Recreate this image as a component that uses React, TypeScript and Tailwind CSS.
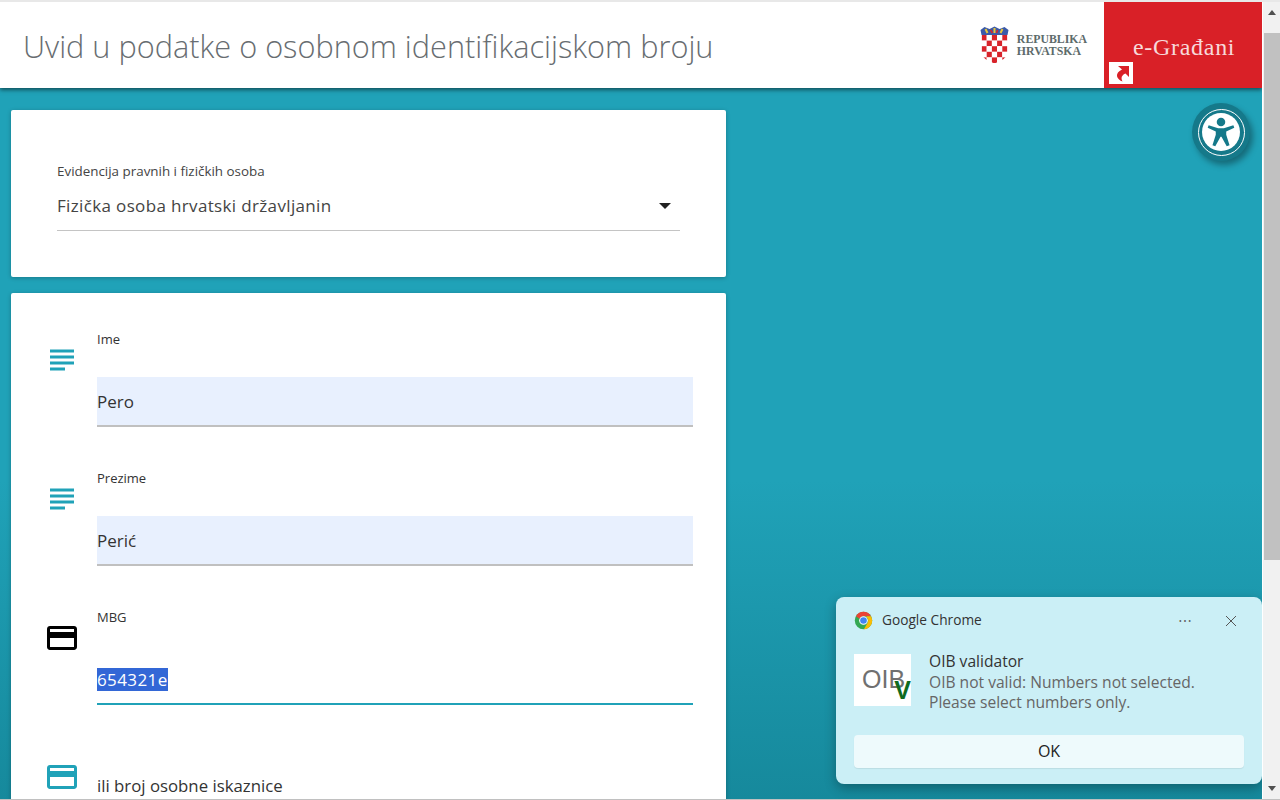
const CARD = "M20 4H4c-1.11 0-1.99.89-1.99 2L2 18c0 1.11.89 2 2 2h16c1.11 0 2-.89 2-2V6c0-1.11-.89-2-2-2zm0 14H4v-6h16v6zm0-10H4V6h16v2z";
const SUBJECT = "M14 17H4v2h10v-2zm6-8H4v2h16V9zM4 15h16v-2H4v2zM4 5v2h16V5H4z";

function Icon({ d, color }: { d: string; color: string }) {
  return (
    <svg viewBox="0 0 24 24" className="h-9 w-9 shrink-0" fill={color}>
      <path d={d} />
    </svg>
  );
}

function Crest() {
  const cells: React.ReactNode[] = [];
  for (let r = 0; r < 5; r++) {
    for (let c = 0; c < 5; c++) {
      cells.push(
        <rect key={`${r}-${c}`} x={1 + c * 5.2} y={9 + r * 5.6} width={5.2} height={5.6} fill={(r + c) % 2 === 0 ? "#d8232a" : "#ffffff"} />
      );
    }
  }
  return (
    <svg viewBox="0 0 28 38" className="h-[38px] w-[33px] shrink-0">
      <defs>
        <clipPath id="shield">
          <path d="M1 9 H27 V28 Q26 33 14 37.5 Q2 33 1 28 Z" />
        </clipPath>
      </defs>
      <path d="M0 4 L4 1 L9 3 L14 0.5 L19 3 L24 1 L28 4 L27 9 L1 9 Z" fill="#3b5aa8" />
      <path d="M5 3 L7 7 M14 2 L14 7 M22 3 L20 7" stroke="#e8c53a" strokeWidth="2" />
      <path d="M10 4 L12 7 M17 4 L16 7" stroke="#d8232a" strokeWidth="1.5" />
      <g clipPath="url(#shield)">{cells}</g>
    </svg>
  );
}

function ChromeLogo() {
  return (
    <svg viewBox="0 0 48 48" className="h-[19px] w-[19px] shrink-0">
      <circle cx="24" cy="24" r="22" fill="#34a853" />
      <path d="M24 2a22 22 0 0 1 19 11H24a11 11 0 0 0-10 6.5L5 13A22 22 0 0 1 24 2z" fill="#ea4335" />
      <path d="M43 13a22 22 0 0 1-18 33l9.5-16.5A11 11 0 0 0 33 17l-2-4z" fill="#fbbc04" />
      <circle cx="24" cy="24" r="11" fill="#ffffff" />
      <circle cx="24" cy="24" r="8.4" fill="#4285f4" />
    </svg>
  );
}

function TextRow({ label, value, first }: { label: string; value: string; first?: boolean }) {
  return (
    <div className={`flex ${first ? "" : "mt-[42px]"}`}>
      <div className="ml-[33px] mt-[12px] w-[53px]">
        <Icon d={SUBJECT} color="#20a2b8" />
      </div>
      <div className="flex w-[596px] flex-col">
        <div className="h-[47px] text-[13px] leading-[18px] text-[#333]">{label}</div>
        <div className="flex h-[50px] items-center border-b-2 border-[#c0c0c0] bg-[#e8f0fe] pt-[1px] text-[17px] text-[#333]">{value}</div>
      </div>
    </div>
  );
}

export default function App() {
  return (
    <div className="flex h-screen w-[1280px] flex-col overflow-hidden bg-[#f1f1f1] font-['Open_Sans','Noto_Sans',sans-serif]">
      <div className="h-[2px] shrink-0 bg-[#e8e8e8]" />
      <div className="flex min-h-0 flex-1">
        <div className="relative flex w-[1262px] shrink-0 flex-col overflow-hidden bg-[linear-gradient(180deg,#20a2b8_0%,#20a2b8_60%,#16899c_100%)]">
          <header className="relative z-10 flex h-[86px] shrink-0 items-stretch justify-between bg-white shadow-[0_2px_4px_rgba(0,0,0,0.5)]">
            <h1 className="pl-[23px] pt-[22px] text-[30.7px] font-light leading-[44px] text-[#686d71]">Uvid u podatke o osobnom identifikacijskom broju</h1>
            <div className="flex">
              <div className="mr-[17px] flex items-start gap-[6px] pt-[24px]">
                <Crest />
                <div className="pt-[8px] font-['Liberation_Serif',serif] text-[11.8px] font-bold leading-[11.5px] text-[#5d6b6b]">
                  <div>REPUBLIKA</div>
                  <div>HRVATSKA</div>
                </div>
              </div>
              <div className="flex w-[158px] flex-col bg-[#d92027]">
                <div className="pl-[29px] pt-[32px] font-['Liberation_Serif',serif] text-[24px] leading-[26px] tracking-[0.7px] text-[#f7d9da]">e-Građani</div>
                <div className="ml-[5px] mt-[2px] flex h-[22px] w-[24px] items-center justify-center bg-white">
                  <svg viewBox="0 0 24 22" className="h-[22px] w-[24px]" fill="#d92027">
                    <path d="M9 4 H20 V15 L16.5 11.5 C13 13 11.5 15.5 13.5 19.5 C7 17 5.5 11 13 7.5 Z" />
                  </svg>
                </div>
              </div>
            </div>
          </header>

          <main className="box-content flex w-[715px] flex-col gap-[16px] pl-[11px] pt-[22px]">
            <section className="flex h-[167px] flex-col rounded-[2px] bg-white px-[46px] pt-[52px] shadow-[0_1px_4px_rgba(0,0,0,0.25)]">
              <div className="text-[13.4px] leading-[18px] text-[#444]">Evidencija pravnih i fizičkih osoba</div>
              <div className="mt-[8px] flex h-[43px] w-[623px] items-center justify-between border-b border-[#c4c4c4] pb-[6px] pr-[9px]">
                <span className="text-[17px] tracking-[0.35px] text-[#444]">Fizička osoba hrvatski državljanin</span>
                <span className="h-0 w-0 border-x-[6px] border-t-[6px] border-x-transparent border-t-[#222]" />
              </div>
            </section>

            <section className="h-[520px] overflow-hidden rounded-[2px] bg-white pt-[37px] shadow-[0_1px_4px_rgba(0,0,0,0.25)]">
              <TextRow first label="Ime" value="Pero" />
              <TextRow label="Prezime" value="Perić" />
              <div className="mt-[42px] flex">
                <div className="ml-[33px] mt-[12px] w-[53px]">
                  <Icon d={CARD} color="#000000" />
                </div>
                <div className="flex w-[596px] flex-col">
                  <div className="h-[47px] text-[13px] leading-[18px] text-[#333]">MBG</div>
                  <div className="flex h-[50px] items-center border-b-2 border-[#20a2b8] pt-[1px] text-[17px] tracking-[0.4px]">
                    <span className="bg-[#3367d6] leading-[23px] text-white">654321e</span>
                  </div>
                </div>
              </div>
              <div className="mt-[54px] flex">
                <div className="ml-[33px] w-[53px]">
                  <Icon d={CARD} color="#20a2b8" />
                </div>
                <div className="pt-[15px] text-[16.8px] leading-[24px] text-[#333]">ili broj osobne iskaznice</div>
              </div>
            </section>
          </main>

          <button className="absolute left-[1192px] top-[101px] flex h-[58px] w-[58px] items-center justify-center rounded-full bg-[#15798a] shadow-[3px_4px_6px_rgba(0,0,0,0.35)]">
            <span className="flex h-[47px] w-[47px] items-center justify-center rounded-full border-[1.5px] border-white">
              <span className="flex h-[38px] w-[38px] items-center justify-center rounded-full bg-white">
                <svg viewBox="0 0 40 40" className="h-[38px] w-[38px]" fill="#15798a">
                  <circle cx="20" cy="9.5" r="4.5" />
                  <path d="M6 15.5 L7 13 L17 16 H23 L33 13 L34 15.5 L25.5 19.5 V23 L29 34 L26 35 L20.5 25 H19.5 L14 35 L11 34 L14.5 23 V19.5 Z" />
                </svg>
              </span>
            </span>
          </button>

          <aside className="absolute left-[836px] top-[595px] h-[187px] w-[426px] rounded-[8px] bg-[#cbeff6] px-[18px] pt-[14px] shadow-[0_4px_12px_rgba(0,0,0,0.3)]">
            <div className="flex h-[19px] items-center pr-[7px]">
              <ChromeLogo />
              <span className="ml-[9px] text-[13.7px] text-[#333]">Google Chrome</span>
              <span className="ml-auto text-[14px] leading-none tracking-[0.5px] text-[#666]">⋯</span>
              <svg viewBox="0 0 12 12" className="ml-[33px] h-[12px] w-[12px]" stroke="#555" strokeWidth="1" fill="none">
                <path d="M1 1 L11 11 M11 1 L1 11" />
              </svg>
            </div>
            <div className="mt-[24px] flex">
              <div className="relative h-[52px] w-[57px] shrink-0 bg-white pl-[8px] pt-[8px] font-['Liberation_Sans',sans-serif] text-[25px] leading-[34px] text-[#707070]">
                <span>OIB</span>
                <span className="absolute bottom-[4px] right-0 text-[25px] font-bold leading-[24px] text-[#0f6b1f]">V</span>
              </div>
              <div className="-mt-[3px] ml-[18px] text-[15.6px] leading-[20.5px] text-[#666]">
                <div className="text-[#333]">OIB validator</div>
                <div>OIB not valid: Numbers not selected.</div>
                <div>Please select numbers only.</div>
              </div>
            </div>
            <div className="mt-[22px] flex h-[33px] w-[390px] items-center justify-center rounded-[4px] bg-[#eefafc] text-[16px] text-[#222] shadow-[0_1px_1px_rgba(0,0,0,0.08)]">OK</div>
          </aside>
        </div>

        <div className="flex w-[18px] shrink-0 flex-col items-center border-l border-[#ffffff] pl-[1px] pt-[8px]">
          <span className="h-0 w-0 border-x-[4px] border-b-[5px] border-x-transparent border-b-[#505050]" />
          <div className="mt-[18px] h-[527px] w-full bg-[#c1c1c1]" />
          <span className="mb-[8px] mt-auto h-0 w-0 border-x-[4px] border-t-[5px] border-x-transparent border-t-[#505050]" />
        </div>
      </div>
      <div className="h-[1px] shrink-0 bg-[#c0c0c0]" />
    </div>
  );
}
